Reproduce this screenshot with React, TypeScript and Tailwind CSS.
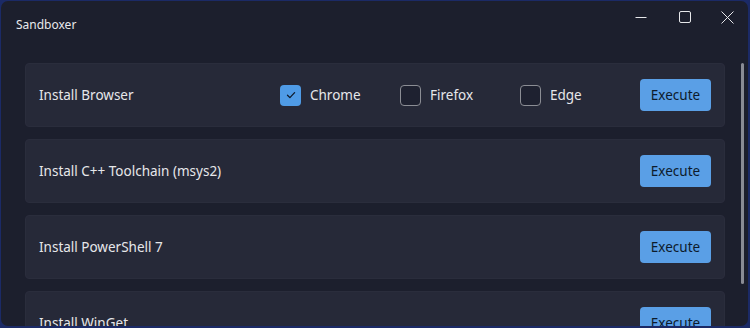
import { useState } from "react";

type Task = {
  label: string;
  hasBrowsers?: boolean;
};

const tasks: Task[] = [
  { label: "Install Browser", hasBrowsers: true },
  { label: "Install C++ Toolchain (msys2)" },
  { label: "Install PowerShell 7" },
  { label: "Install WinGet" },
];

const browsers = ["Chrome", "Firefox", "Edge"];

function Checkbox({ checked, label, onToggle }: { checked: boolean; label: string; onToggle: () => void }) {
  return (
    <button type="button" onClick={onToggle} className="flex w-[120px] items-center gap-[9px] text-left">
      <span
        className={`flex h-[21px] w-[21px] items-center justify-center rounded-[4px] ${
          checked ? "bg-[#4f9be6]" : "border border-[#8b8d94] bg-[#1e2130]"
        }`}
      >
        {checked && (
          <svg width="12" height="12" viewBox="0 0 12 12" fill="none">
            <path d="M2.5 6.3 L4.9 8.6 L9.6 3.6" stroke="#0f1a2a" strokeWidth="1.3" strokeLinecap="round" strokeLinejoin="round" />
          </svg>
        )}
      </span>
      <span className="text-[13.5px] text-[#e6e7ea]">{label}</span>
    </button>
  );
}

function TaskCard({ task }: { task: Task }) {
  const [selected, setSelected] = useState<Record<string, boolean>>({ Chrome: true });

  return (
    <div className="flex h-16 shrink-0 items-center rounded-[4px] border border-[#2a2d3c] bg-[#262938] pl-[13px] pr-[13px]">
      <span className="text-[13.5px] text-[#e6e7ea]">{task.label}</span>
      <div className="flex-1" />
      {task.hasBrowsers && (
        <div className="flex">
          {browsers.map((name) => (
            <Checkbox
              key={name}
              label={name}
              checked={!!selected[name]}
              onToggle={() => setSelected((previous) => ({ ...previous, [name]: !previous[name] }))}
            />
          ))}
        </div>
      )}
      <button
        type="button"
        className="h-8 w-[71px] rounded-[4px] bg-[#5a9fe6] text-[13.5px] text-[#0d1b2c] hover:bg-[#6aa9ea]"
      >
        Execute
      </button>
    </div>
  );
}

export default function App() {
  return (
    <div
      className="h-[328px] w-[750px] overflow-hidden bg-[#1b2a66] pl-px pt-px"
      style={{ fontFamily: '"Segoe UI", "Noto Sans", "Open Sans", sans-serif' }}
    >
      <div className="relative flex h-[325px] w-[747px] flex-col overflow-hidden rounded-[7px] bg-[#1c1f2d]">
        <div className="flex h-[47px] shrink-0 items-start">
          <span className="pl-[15px] pt-[15px] text-[12px] text-[#e8e9ec]">Sandboxer</span>
          <div className="flex-1" />
          <div className="flex h-8 items-center">
            <button type="button" className="flex h-8 w-[44px] items-center justify-center">
              <svg width="12" height="12" viewBox="0 0 12 12">
                <path d="M0.5 6.5 H11.5" stroke="#e6e7ea" strokeWidth="1" />
              </svg>
            </button>
            <button type="button" className="flex h-8 w-[44px] items-center justify-center">
              <svg width="12" height="12" viewBox="0 0 12 12" fill="none">
                <rect x="0.5" y="0.5" width="11" height="11" rx="1.5" stroke="#e6e7ea" strokeWidth="1" />
              </svg>
            </button>
            <button type="button" className="flex h-8 w-[41px] items-center justify-center">
              <svg width="13" height="13" viewBox="0 0 13 13" fill="none">
                <path d="M0.5 0.5 L12.5 12.5 M12.5 0.5 L0.5 12.5" stroke="#e6e7ea" strokeWidth="1" />
              </svg>
            </button>
          </div>
        </div>

        <div className="flex flex-col gap-3 pl-6 pr-[23px] pt-[15px]">
          {tasks.map((task) => (
            <TaskCard key={task.label} task={task} />
          ))}
        </div>

        {/* overlay scrollbar */}
        <div className="absolute left-[740px] top-[62px] h-[221px] w-[3px] rounded-full bg-[#8a8c95]" />
      </div>
    </div>
  );
}
